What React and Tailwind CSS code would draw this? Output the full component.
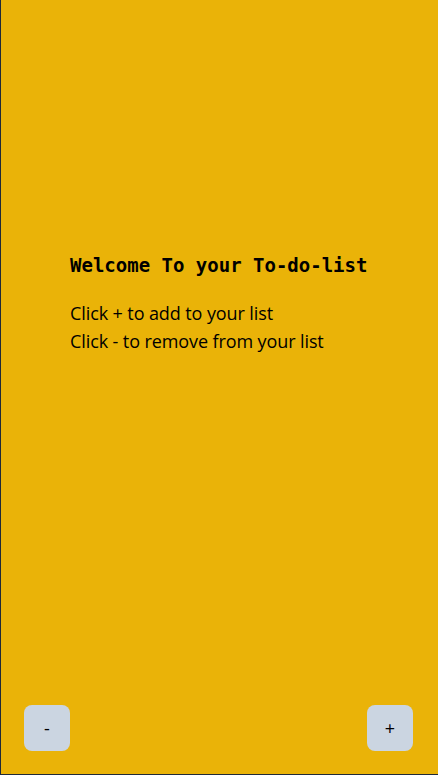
import React from 'react';

// Tela inicial da lista de tarefas
const App = () => {
  return (
    <div className="h-[775px] w-full bg-[#eab308] border-l border-b border-[#1f2937] flex flex-col justify-between">
      <div className="pt-[251px] pl-[69px]">
        <h1 className="text-[19px] leading-7 font-bold text-black font-['DejaVu_Sans_Mono',monospace]">
          Welcome To your To-do-list
        </h1>
        <div className="mt-[20px] text-[18px] leading-7 text-black font-['Open_Sans',sans-serif] tracking-[-0.1px]">
          <p>Click + to add to your list</p>
          <p>Click - to remove from your list</p>
        </div>
      </div>

      <div className="flex justify-between pl-[23px] pr-[25px] pb-[23px]">
        <button className="w-[46px] h-[46px] rounded-lg bg-[#cbd5e1] text-black text-[18px] font-['Open_Sans',sans-serif]">
          -
        </button>
        <button className="w-[46px] h-[46px] rounded-lg bg-[#cbd5e1] text-black text-[18px] font-['Open_Sans',sans-serif]">
          +
        </button>
      </div>
    </div>
  );
};

export default App;
